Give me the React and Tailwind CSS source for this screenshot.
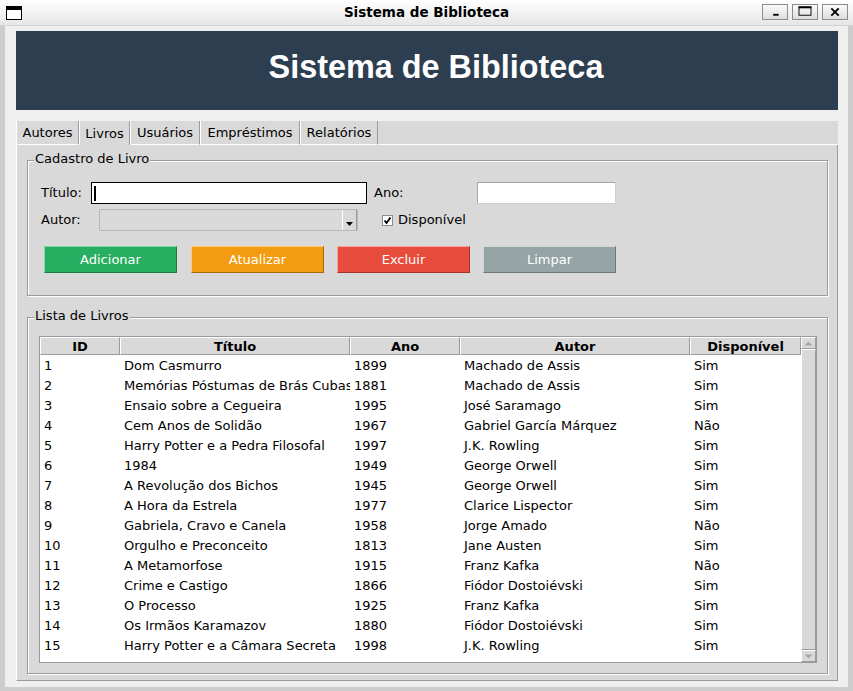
import React from 'react';

const BOOKS = [
  [1, 'Dom Casmurro', 1899, 'Machado de Assis', 'Sim'],
  [2, 'Memórias Póstumas de Brás Cubas', 1881, 'Machado de Assis', 'Sim'],
  [3, 'Ensaio sobre a Cegueira', 1995, 'José Saramago', 'Sim'],
  [4, 'Cem Anos de Solidão', 1967, 'Gabriel García Márquez', 'Não'],
  [5, 'Harry Potter e a Pedra Filosofal', 1997, 'J.K. Rowling', 'Sim'],
  [6, '1984', 1949, 'George Orwell', 'Sim'],
  [7, 'A Revolução dos Bichos', 1945, 'George Orwell', 'Sim'],
  [8, 'A Hora da Estrela', 1977, 'Clarice Lispector', 'Sim'],
  [9, 'Gabriela, Cravo e Canela', 1958, 'Jorge Amado', 'Não'],
  [10, 'Orgulho e Preconceito', 1813, 'Jane Austen', 'Sim'],
  [11, 'A Metamorfose', 1915, 'Franz Kafka', 'Não'],
  [12, 'Crime e Castigo', 1866, 'Fiódor Dostoiévski', 'Sim'],
  [13, 'O Processo', 1925, 'Franz Kafka', 'Sim'],
  [14, 'Os Irmãos Karamazov', 1880, 'Fiódor Dostoiévski', 'Sim'],
  [15, 'Harry Potter e a Câmara Secreta', 1998, 'J.K. Rowling', 'Sim'],
];

const COLUMNS = [
  { label: 'ID', width: 'w-[80px]' },
  { label: 'Título', width: 'w-[230px]' },
  { label: 'Ano', width: 'w-[110px]' },
  { label: 'Autor', width: 'w-[230px]' },
  { label: 'Disponível', width: 'w-[111px]' },
];

const TABS = [
  { label: 'Autores', width: 'w-[63px]' },
  { label: 'Livros', width: 'w-[51px]', active: true },
  { label: 'Usuários', width: 'w-[70px]' },
  { label: 'Empréstimos', width: 'w-[100px]' },
  { label: 'Relatórios', width: 'w-[78px]' },
];

function TitleButton({ children }) {
  return (
    <div className="flex h-[16px] w-[26px] items-center justify-center border border-[#8c8c8c] bg-gradient-to-b from-[#fafafa] to-[#dedede]">
      {children}
    </div>
  );
}

function TitleBar() {
  return (
    <div className="relative flex h-[26px] shrink-0 items-center justify-center border-b border-[#d2d2d2] bg-gradient-to-b from-white to-[#e6e6e6]">
      <svg className="absolute left-[6px] top-[6px]" width="16" height="14" viewBox="0 0 16 14">
        <rect x="0.5" y="0.5" width="15" height="13" fill="white" stroke="black" />
        <rect x="0" y="0" width="16" height="4" fill="black" />
      </svg>
      <span className="text-[13.5px] font-bold text-black">Sistema de Biblioteca</span>
      <div className="absolute right-[5px] top-[4px] flex gap-[4px]">
        <TitleButton>
          <svg width="26" height="16" viewBox="0 0 26 16">
            <rect x="11" y="10" width="6" height="2" fill="black" />
          </svg>
        </TitleButton>
        <TitleButton>
          <svg width="26" height="16" viewBox="0 0 26 16">
            <rect x="6.5" y="2.5" width="13" height="9" fill="none" stroke="black" />
            <rect x="6" y="2" width="14" height="2" fill="black" />
          </svg>
        </TitleButton>
        <TitleButton>
          <svg width="26" height="16" viewBox="0 0 26 16">
            <path d="M9 4 L17 12 M17 4 L9 12" stroke="black" strokeWidth="2" />
          </svg>
        </TitleButton>
      </div>
    </div>
  );
}

// moldura com título sobre a borda (tipo LabelFrame do Tk)
function LabelFrame({ title, className, children }) {
  return (
    <div
      className={`relative border border-[#9b9b9b] shadow-[inset_1px_1px_0_white,1px_1px_0_white] ${className}`}
    >
      <span className="absolute left-[6px] top-[-10px] bg-[#d9d9d9] px-[1px] leading-[15px]">{title}</span>
      {children}
    </div>
  );
}

function ActionButton({ label, className }) {
  return (
    <div
      className={`flex h-[27px] w-[133px] items-center justify-center border text-white ${className}`}
    >
      {label}
    </div>
  );
}

function BookForm() {
  return (
    <LabelFrame title="Cadastro de Livro" className="mt-[15px] h-[136px]">
      <div className="mt-[21px] flex h-[22px] items-center pl-[13px]">
        <span className="w-[50px]">Título:</span>
        <div className="relative h-[22px] w-[276px] border border-black bg-white">
          <div className="absolute left-[2px] top-[3px] h-[15px] w-[2px] bg-black" />
        </div>
        <span className="ml-[7px] w-[103px]">Ano:</span>
        <div className="h-[22px] w-[139px] border border-[#a4a4a4] border-b-[#d0d0d0] border-r-[#d0d0d0] bg-white" />
      </div>

      <div className="mt-[5px] flex h-[22px] items-center pl-[13px]">
        <span className="w-[58px]">Autor:</span>
        <div className="flex h-[22px] w-[259px] border border-[#b8b8b8] bg-[#d9d9d9]">
          <div className="flex-1" />
          <div className="flex w-[15px] items-end justify-center border-l border-white border-r border-r-[#9b9b9b] pb-[3px]">
            <svg width="8" height="5" viewBox="0 0 8 5">
              <path d="M0 0 H7 L3.5 4 Z" fill="black" />
            </svg>
          </div>
        </div>
        <div className="ml-[24px] flex h-[11px] w-[11px] items-center justify-center border border-[#8e8e8e] bg-white">
          <svg width="9" height="9" viewBox="0 0 9 9">
            <path d="M1.5 4.5 L3.5 7 L7.5 1.5" fill="none" stroke="black" strokeWidth="1.8" />
          </svg>
        </div>
        <span className="ml-[5px]">Disponível</span>
      </div>

      <div className="mt-[15px] flex pl-[16px]">
        <ActionButton
          label="Adicionar"
          className="border-[#7fd9a4] border-b-[#1d7a45] border-r-[#1d7a45] bg-[#27ae60]"
        />
        <ActionButton
          label="Atualizar"
          className="ml-[14px] border-[#f9cb80] border-b-[#a8690a] border-r-[#a8690a] bg-[#f39c12]"
        />
        <ActionButton
          label="Excluir"
          className="ml-[13px] border-[#f5a49b] border-b-[#a3342a] border-r-[#a3342a] bg-[#e74c3c]"
        />
        <ActionButton
          label="Limpar"
          className="ml-[13px] border-[#cfd7d8] border-b-[#6b7778] border-r-[#6b7778] bg-[#95a5a6] text-[#eef2f3]"
        />
      </div>
    </LabelFrame>
  );
}

function ScrollArrow({ up }) {
  return (
    <div className="flex h-[12px] shrink-0 items-center justify-center border border-white border-b-[#9b9b9b] border-r-[#9b9b9b] bg-[#d9d9d9]">
      <svg width="9" height="5" viewBox="0 0 9 5">
        {up ? (
          <path d="M0.5 4.5 H8.5 L4.5 0.5 Z" fill="#a8a8a8" />
        ) : (
          <path d="M0.5 0.5 H8.5 L4.5 4.5 Z" fill="#a8a8a8" />
        )}
      </svg>
    </div>
  );
}

function BookTable() {
  return (
    <LabelFrame title="Lista de Livros" className="mt-[21px] h-[357px]">
      <div className="ml-[11px] mt-[18px] flex h-[327px] w-[778px] border border-[#9b9b9b] bg-white">
        <div className="flex w-[761px] flex-col">
          <div className="flex h-[18px] shrink-0">
            {COLUMNS.map((col) => (
              <div
                key={col.label}
                className={`${col.width} flex items-center justify-center border-l border-t border-white border-b border-r border-b-[#9b9b9b] border-r-[#9b9b9b] bg-[#d9d9d9] font-bold leading-none`}
              >
                {col.label}
              </div>
            ))}
          </div>
          {BOOKS.map((book) => (
            <div key={book[0]} className="flex h-[20px] items-center pt-[1px]">
              {book.map((value, i) => (
                <div
                  key={i}
                  className={`${COLUMNS[i].width} overflow-hidden whitespace-nowrap pl-[4px]`}
                >
                  {value}
                </div>
              ))}
            </div>
          ))}
        </div>
        <div className="flex w-[15px] flex-col bg-[#d9d9d9]">
          <ScrollArrow up />
          <div className="flex-1 border border-white border-b-[#9b9b9b] border-r-[#9b9b9b] bg-[#d9d9d9]" />
          <ScrollArrow />
        </div>
      </div>
    </LabelFrame>
  );
}

export default function App() {
  return (
    <div className="flex h-[691px] w-[853px] flex-col overflow-hidden bg-[#cdcdcd] font-['DejaVu_Sans',sans-serif] text-[13px] text-black">
      <TitleBar />
      <div className="mx-[5px] mb-[4px] flex flex-1 flex-col bg-[#efefef] pb-[6px] pl-[11px] pr-[10px] pt-[5px]">
        <div className="flex h-[79px] shrink-0 items-center justify-center bg-[#2c3e50] pb-[6px] pl-[18px]">
          <h1 className="font-['Liberation_Sans',Arial,sans-serif] text-[32.4px] font-bold text-white">
            Sistema de Biblioteca
          </h1>
        </div>

        <div className="mt-[11px] flex flex-1 flex-col">
          <div className="flex h-[24px] shrink-0 bg-[#d9d9d9]">
            {TABS.map((tab) => (
              <div
                key={tab.label}
                className={`${tab.width} flex items-center justify-center border-l border-white border-r border-r-[#9b9b9b] pt-[1px] ${
                  tab.active ? '' : 'border-b'
                }`}
              >
                {tab.label}
              </div>
            ))}
            <div className="flex-1 border-b border-white" />
          </div>
          <div className="flex flex-1 flex-col border-l border-white border-r border-r-[#9b9b9b] border-b border-b-[#9b9b9b] bg-[#d9d9d9] pl-[10px] pr-[9px]">
            <BookForm />
            <BookTable />
          </div>
        </div>
      </div>
    </div>
  );
}
